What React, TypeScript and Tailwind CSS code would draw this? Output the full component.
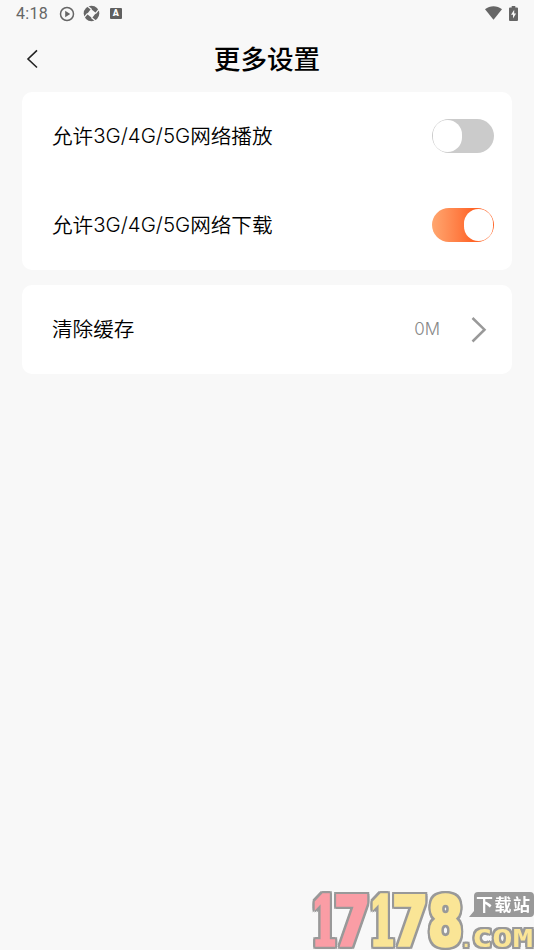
import { useState } from "react";
import clsx from "clsx";

interface SwitchProps {
    label: string;
    checked: boolean;
    onChange: (value: boolean) => void;
}

const LATIN = /([0-9A-Z/]+)/;

// 中英文混排：西文部分使用更细的字体
function MixedText({ text }: { text: string }) {
    return (
        <span className="flex items-center pb-[3px] text-[20.6px] leading-[30px] font-[350] whitespace-nowrap text-black">
            {text.split(LATIN).map((part, idx) => (
                <span
                    key={idx}
                    className={clsx(
                        LATIN.test(part) &&
                            "pt-[2px] font-['Inter','Liberation_Sans',sans-serif] text-[20.4px] leading-[30px] font-light"
                    )}
                >
                    {part}
                </span>
            ))}
        </span>
    );
}

function SwitchRow({ label, checked, onChange }: SwitchProps) {
    return (
        <div className="flex h-[89px] items-center justify-between pr-[18px] pb-px pl-[30px]">
            <MixedText text={label} />
            <button
                role="switch"
                aria-checked={checked}
                aria-label={label}
                onClick={() => onChange(!checked)}
                className={clsx(
                    "flex h-[33.5px] w-[62.5px] items-center rounded-full px-px",
                    checked
                        ? "justify-end bg-gradient-to-r from-[#ffa66f] to-[#ff6527] to-65%"
                        : "justify-start bg-[#cbcbcb]"
                )}
            >
                <span className="h-[31.5px] w-[29.5px] rounded-full bg-white" />
            </button>
        </div>
    );
}

function StatusBar() {
    return (
        <div className="flex h-7 items-center justify-between pr-4 pb-px pl-[16px] text-[#666]">
            <div className="flex items-center">
                <span className="w-[43px] font-['Roboto',sans-serif] text-[16px] leading-none tracking-[0.3px]">4:18</span>
                <svg className="h-4 w-4" viewBox="0 0 16 16" fill="none">
                    <circle cx="8" cy="8" r="6.5" stroke="currentColor" strokeWidth="1.5" />
                    <path d="M6.2 4.7v6.6L11.2 8z" fill="currentColor" />
                </svg>
                <svg className="ml-2 h-[17px] w-[17px]" viewBox="0 0 17 17">
                    <circle cx="8.5" cy="8.5" r="7.8" fill="currentColor" />
                    <path d="M8 4 13 8 9 13 4 9z" fill="#f8f8f8" />
                    <path
                        d="M8.6 4.6 4.4 1M12.4 8.6 16 4.4M8.4 12.4 12.6 16M4.6 8.4 1 12.6"
                        stroke="#f8f8f8"
                        strokeWidth="1.3"
                    />
                </svg>
                <span className="ml-[10px] flex h-[11.5px] w-[11.5px] items-center justify-center rounded-[1px] bg-[#606060] font-['Roboto',sans-serif] text-[9px] leading-none font-black text-white">
                    A
                </span>
            </div>
            <div className="flex items-center gap-[7px] pb-px">
                <svg className="h-[14px] w-[17px]" viewBox="0 0 17 14">
                    <path d="M0 3.3C5-.9 12-.9 17 3.3L8.5 13.8z" fill="currentColor" />
                </svg>
                <svg className="h-[15px] w-[9px]" viewBox="0 0 9 15">
                    <path d="M2.7 0h3.6v1.4H8q1 0 1 1V14q0 1-1 1H1q-1 0-1-1V2.4q0-1 1-1h1.7z" fill="currentColor" />
                    <path d="M5.2 3.8 2 8.8h2v3.7l3.1-5H5.2z" fill="#f8f8f8" />
                </svg>
            </div>
        </div>
    );
}

const SLAB = "'DejaVu Serif', serif";
const SANS = "'DejaVu Sans', sans-serif";

const DIGITS = [
    { char: "1", x: 3, width: 27, color: "#fa9da5", font: SLAB },
    { char: "7", x: 26, width: 36, color: "#fa9da5", font: SANS },
    { char: "1", x: 61, width: 27, color: "#fae596", font: SLAB },
    { char: "7", x: 84, width: 36, color: "#fae596", font: SANS },
    { char: "8", x: 120, width: 35, color: "#fae596", font: SANS },
];

const OUTLINE =
    "[filter:drop-shadow(2px_0_0_#999)_drop-shadow(-2px_0_0_#999)_drop-shadow(0_2px_0_#999)_drop-shadow(0_-2px_0_#999)]";

// 右下角站点水印
function Watermark() {
    return (
        <div className="fixed right-0 bottom-0 h-[62px] w-[226px]">
            <svg className="h-full w-full" viewBox="0 0 226 62" fontWeight="700">
                {DIGITS.map((digit, idx) => (
                    <g key={idx} className={OUTLINE}>
                        <text
                            x={digit.x}
                            y="57"
                            fontSize="68"
                            textLength={digit.width}
                            lengthAdjust="spacingAndGlyphs"
                            fontFamily={digit.font}
                            fill={digit.color}
                            stroke={digit.color}
                            strokeWidth="3.5"
                        >
                            {digit.char}
                        </text>
                    </g>
                ))}
                <path d="M170 4h52q4 0 4 4v17q0 4-4 4h-61l5-6V8q0-4 4-4z" fill="#999" />
                <text x="168" y="22.5" fontSize="17" textLength="54" fontFamily="'Noto Sans CJK SC', sans-serif" fill="#fff">
                    下载站
                </text>
                <g className={OUTLINE} fontFamily="'DejaVu Sans Mono', monospace" fill="#fae596">
                    <text x="153" y="59" fontSize="17">
                        .
                    </text>
                    <text x="164" y="59" fontSize="25" textLength="61" lengthAdjust="spacingAndGlyphs">
                        COM
                    </text>
                </g>
            </svg>
        </div>
    );
}

export default function App() {
    const [allowPlay, setAllowPlay] = useState(false);
    const [allowDownload, setAllowDownload] = useState(true);

    return (
        <div className="h-screen overflow-hidden bg-[#f8f8f8] font-['Noto_Sans_CJK_SC',sans-serif]">
            <StatusBar />

            {/* 标题栏 */}
            <header className="grid h-16 grid-cols-[1fr_auto_1fr] items-center px-[22px] pb-[3px]">
                <button aria-label="返回" className="w-5">
                    <svg className="h-5 w-5" viewBox="0 0 20 20" fill="none" stroke="#222" strokeWidth="1.6">
                        <path d="M15 1.3 6 10l9 8.5" />
                    </svg>
                </button>
                <h1 className="pb-0.5 text-[26.6px] leading-10 font-medium text-black">更多设置</h1>
            </header>

            <main className="flex flex-col gap-[15px] px-[22px]">
                <section className="rounded-[10px] bg-white">
                    <SwitchRow label="允许3G/4G/5G网络播放" checked={allowPlay} onChange={setAllowPlay} />
                    <SwitchRow label="允许3G/4G/5G网络下载" checked={allowDownload} onChange={setAllowDownload} />
                </section>

                {/* 缓存 */}
                <section className="flex h-[89px] items-center rounded-[10px] bg-white pr-[24px] pl-[30px]">
                    <MixedText text="清除缓存" />
                    <span className="ml-auto font-['Inter','Liberation_Sans',sans-serif] text-[17px] font-light text-[#888]">0M</span>
                    <svg className="ml-[30px] h-[26px] w-[18px]" viewBox="0 0 18 26" fill="none" stroke="#999" strokeWidth="2.5">
                        <path d="M2.5 1 14.5 12.7 2.5 24.5" />
                    </svg>
                </section>
            </main>

            <Watermark />
        </div>
    );
}
